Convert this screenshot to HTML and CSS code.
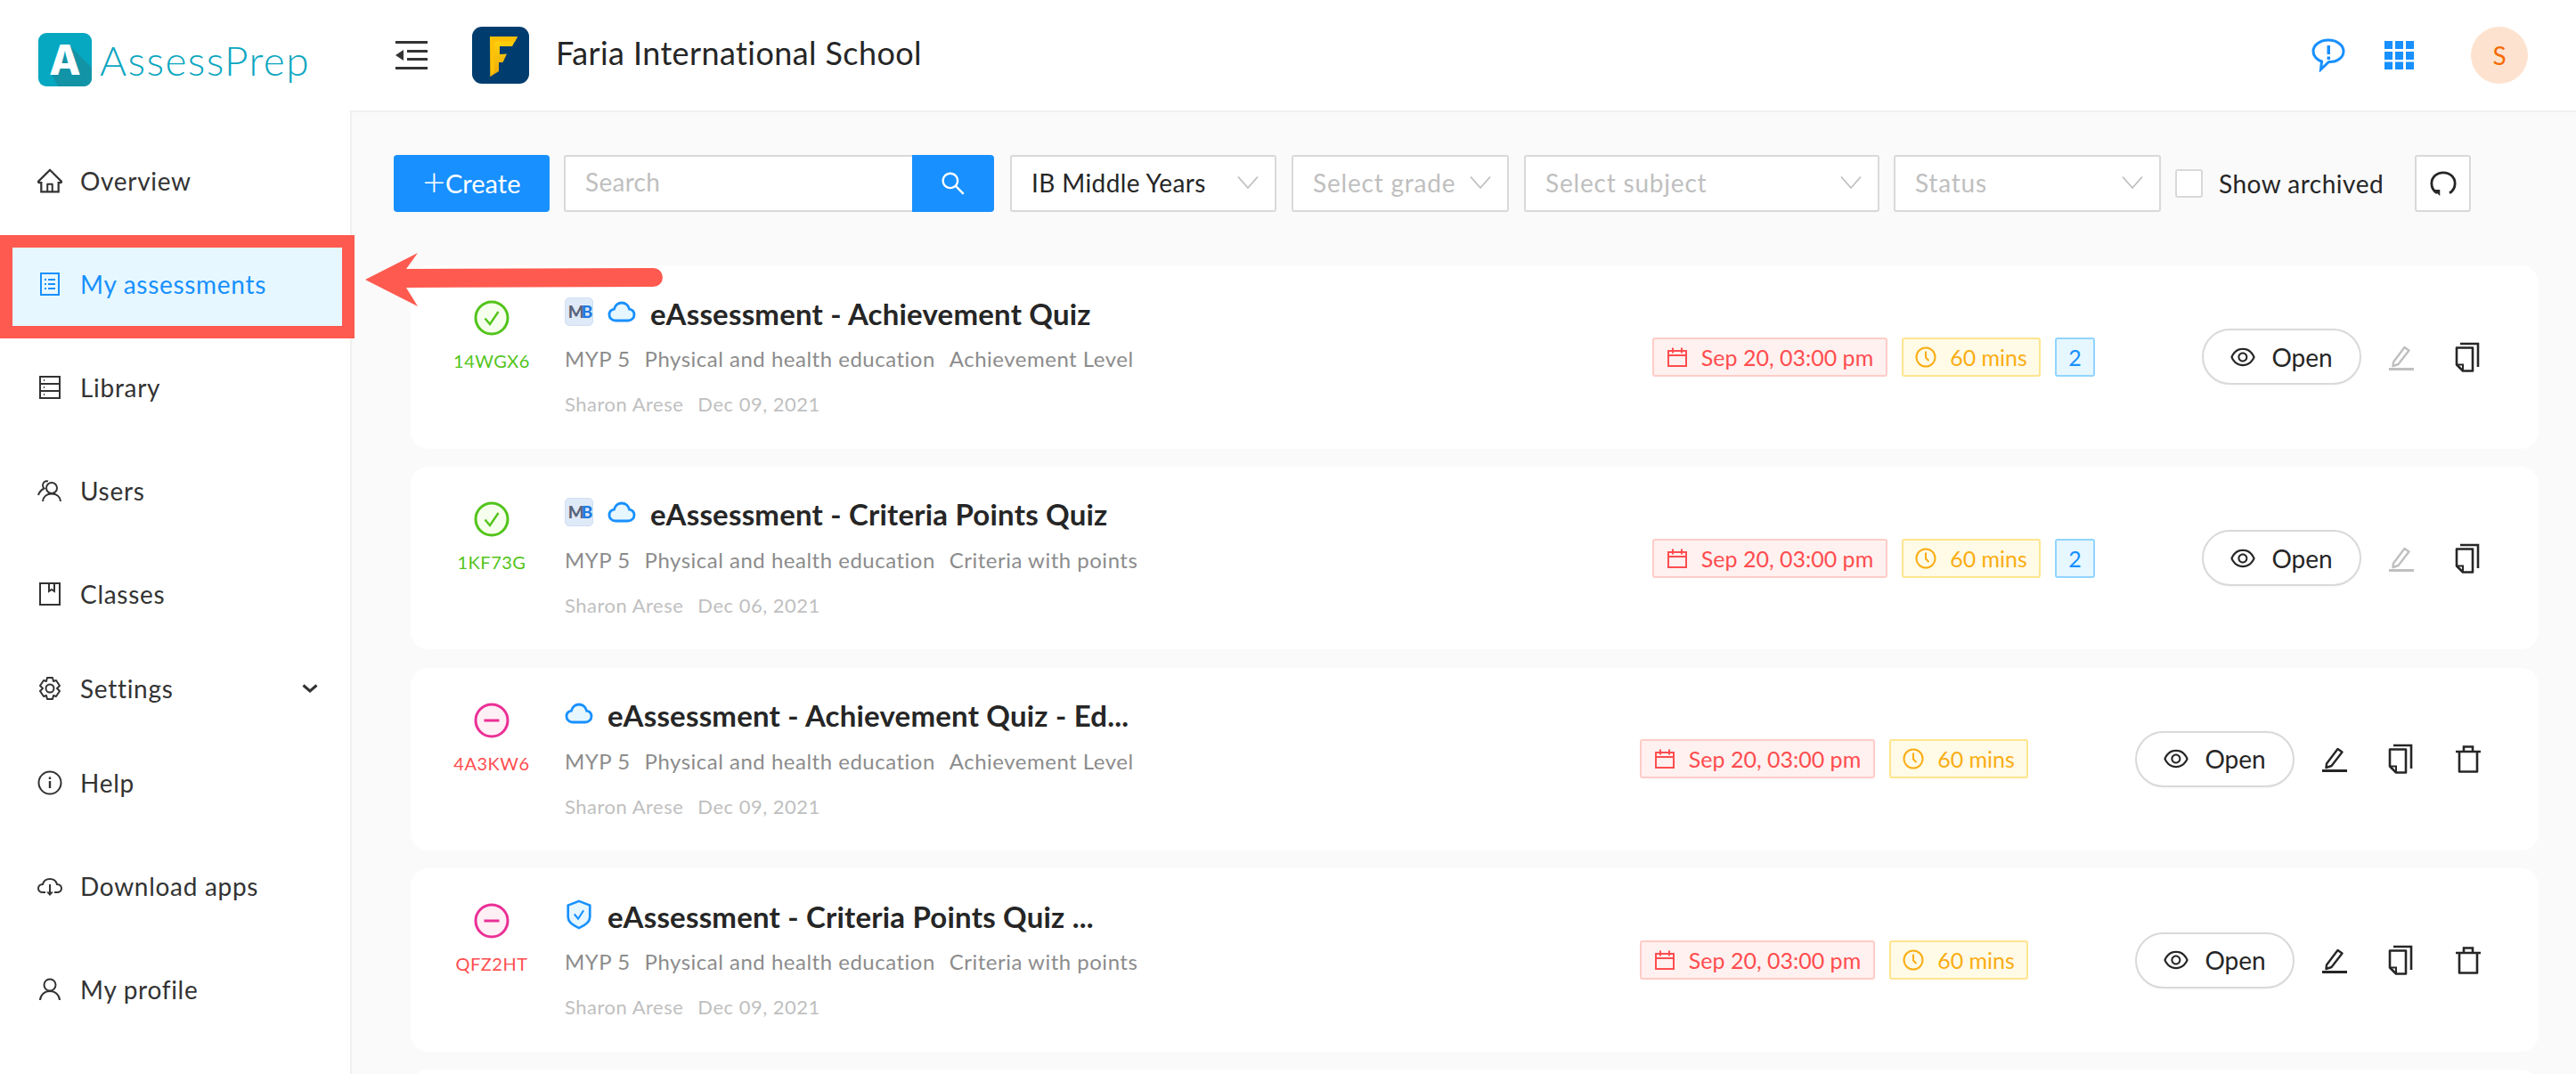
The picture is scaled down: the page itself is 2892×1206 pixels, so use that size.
FILE: index.html
```html
<!DOCTYPE html>
<html lang="en">
<head>
  <meta charset="UTF-8">
  <title>AssessPrep - My assessments</title>
  <link rel="stylesheet" href="styles.css">
</head>
<body>
  <!-- icons used more than once -->
  <svg class="sprite" xmlns="http://www.w3.org/2000/svg">
    <symbol id="i-eye" viewBox="64 64 896 896"><path d="M942.2 486.2C847.4 286.5 704.1 186 512 186c-192.2 0-335.4 100.5-430.2 300.3a60.3 60.3 0 000 51.5C176.6 737.5 319.9 838 512 838c192.2 0 335.4-100.5 430.2-300.3 7.7-16.2 7.7-35 0-51.5zM512 766c-161.3 0-279.4-81.8-362.7-254C232.6 339.8 350.7 258 512 258c161.3 0 279.4 81.8 362.7 254C791.5 684.2 673.4 766 512 766zm-4-430c-97.2 0-176 78.8-176 176s78.8 176 176 176 176-78.8 176-176-78.8-176-176-176zm0 288c-61.9 0-112-50.1-112-112s50.1-112 112-112 112 50.1 112 112-50.1 112-112 112z" fill="currentColor"/></symbol>
    <symbol id="i-cal" viewBox="0 0 24 24"><path d="M2 5h20v17H2zM2 10h20M7 1.500v6M17 1.500v6" fill="none" stroke="currentColor" stroke-width="2"/></symbol>
    <symbol id="i-clock" viewBox="0 0 24 24"><circle cx="12" cy="12" r="10.500" fill="none" stroke="currentColor" stroke-width="2"/><path d="M12 5.500v7l3.500 3.500" fill="none" stroke="currentColor" stroke-width="2"/></symbol>
    <symbol id="i-pencil" viewBox="0 0 30 30"><path d="M6 20.500 18.500 4l5 3.500L11.500 23l-6 2z" fill="none" stroke="currentColor" stroke-width="2.400" stroke-linejoin="round"/><path d="M1 28.500h28" fill="none" stroke="currentColor" stroke-width="3"/></symbol>
    <symbol id="i-copy" viewBox="0 0 30 34"><path d="M6 2h20v26" fill="none" stroke="currentColor" stroke-width="2.600"/><path d="M2 6.500h18v26H9l-7-7z" fill="none" stroke="currentColor" stroke-width="2.600" stroke-linejoin="round"/><path d="M2.500 25.500H9v6.500" fill="none" stroke="currentColor" stroke-width="2"/></symbol>
    <symbol id="i-trash" viewBox="0 0 30 32"><path d="M1 8h28M10 8V2.500h10V8" fill="none" stroke="currentColor" stroke-width="2.600"/><path d="M5 8v22.500h20V8" fill="none" stroke="currentColor" stroke-width="2.600" stroke-linejoin="round"/></symbol>
    <symbol id="i-cloud" viewBox="0 0 32 24"><path d="M9 22C5 22 2 19 2 15.500c0-3.300 2.200-5.700 5.400-6.300C8.500 4.800 12 2 16 2s7.500 2.800 8.600 7.200c3.200.6 5.400 3 5.400 6.300 0 3.500-3 6.500-7 6.500z" fill="#e6f7ff" stroke="#1890ff" stroke-width="2.800"/></symbol>
    <symbol id="i-chevron" viewBox="0 0 24 16"><path d="M1 1.500 12 14 23 1.500" fill="none" stroke="currentColor" stroke-width="1.800"/></symbol>
    <symbol id="i-ok" viewBox="0 0 40 40"><circle cx="20" cy="20" r="18" fill="#f6ffed" stroke="#52c41a" stroke-width="3"/><path d="M12.500 20.500 18 27l9.500-14" fill="none" stroke="#52c41a" stroke-width="2.400"/></symbol>
    <symbol id="i-minus" viewBox="0 0 40 40"><circle cx="20" cy="20" r="18" fill="#fff0f6" stroke="#eb2f96" stroke-width="3"/><path d="M11.500 20h17" fill="none" stroke="#eb2f96" stroke-width="3"/></symbol>
  </svg>

  <header class="topbar">
    <div class="brand">
      <svg class="brand-mark" viewBox="0 0 60 60">
        <rect width="60" height="60" rx="9" fill="#06a7c0"/>
        <path d="M15 46 37 16 60 39v12a9 9 0 0 1-9 9H22z" fill="#1393a6"/>
        <text x="30" y="47" text-anchor="middle" class="brand-letter">A</text>
      </svg>
      <span class="brand-name">AssessPrep</span>
    </div>
    <svg class="collapse-icon" viewBox="0 0 36 32">
      <path d="M0 1.500h36M13 11.500h23M13 20.500h23M0 30.500h36" fill="none" stroke="#333" stroke-width="3"/>
      <path d="M0 16 9 10v12z" fill="#333"/>
    </svg>
    <svg class="school-logo" viewBox="0 0 64 64">
      <defs>
        <linearGradient id="gold" x1="0" y1="0" x2="0" y2="1">
          <stop offset="0" stop-color="#ffd60a"/>
          <stop offset="1" stop-color="#eda80c"/>
        </linearGradient>
      </defs>
      <rect width="64" height="64" rx="11" fill="#003d6e"/>
      <path d="M20 11h31l-6 11H31v9l8-.5-4.500 9.500H30v10l-9.500 6z" fill="url(#gold)"/>
      <path d="M20 11l5 6h23l3-6zM25 17v33l-4.500 6V11z" fill="#ffc107"/>
    </svg>
    <h1 class="school-name">Faria International School</h1>
    <div class="topbar-right">
      <svg class="chat-icon" viewBox="0 0 38 38">
        <path d="M19 2C9.500 2 2 7.700 2 14.500c0 5.500 4.500 10 9.500 11.500l-1 9 9-8.500C29 27 36 21.500 36 14.500 36 7.700 28.500 2 19 2z" fill="none" stroke="#1890ff" stroke-width="3"/>
        <path d="M17.500 8h3.500v10h-3.500zM17.500 20.500h3.500V24h-3.500z" fill="#1890ff"/>
      </svg>
      <svg class="apps-icon" viewBox="0 0 34 32">
        <g fill="#1890ff">
          <rect width="9" height="9"/><rect x="12" width="9" height="9"/><rect x="24" width="9" height="9"/>
          <rect y="12" width="9" height="9"/><rect x="12" y="12" width="9" height="9"/><rect x="24" y="12" width="9" height="9"/>
          <rect y="23.500" width="9" height="9"/><rect x="12" y="23.500" width="9" height="9"/><rect x="24" y="23.500" width="9" height="9"/>
        </g>
      </svg>
      <div class="avatar">S</div>
    </div>
  </header>

  <div class="layout">
    <nav class="sidebar">
      <a class="nav-item" href="#">
        <svg class="nav-icon" viewBox="64 64 896 896"><path fill="currentColor" d="M946.500 505L560.100 118.800l-25.900-25.900a31.500 31.500 0 00-44.400 0L77.500 505a63.900 63.900 0 00-18.800 46c.4 35.200 29.700 63.300 64.900 63.300h42.500V940h691.800V614.300h43.400c17.100 0 33.200-6.700 45.300-18.800a63.600 63.600 0 0018.700-45.300c0-17-6.700-33.100-18.800-45.200zM568 868H456V664h112v204zm217.900-325.700V868H632V640c0-22.100-17.900-40-40-40H432c-22.100 0-40 17.900-40 40v228H238.100V542.300h-96l370-369.700 23.100 23.100L882 542.300h-96.100z"/></svg>
        Overview
      </a>
      <a class="nav-item nav-item-active" href="#">
        <svg class="nav-icon" viewBox="0 0 28 28"><path d="M4 2h20v24H4z" fill="none" stroke="currentColor" stroke-width="2"/><path d="M8 9h2M12 9h8M8 14h2M12 14h8M8 19h2M12 19h8" fill="none" stroke="currentColor" stroke-width="2"/></svg>
        My assessments
        <svg class="callout-arrow" viewBox="0 0 334 60"><path d="M0 30 59 0 46 18 323.500 17a10.500 10.500 0 0 1 0 21L46 39l13 21z" fill="#ff5a4f"/></svg>
      </a>
      <a class="nav-item" href="#">
        <svg class="nav-icon" viewBox="0 0 28 28"><path d="M3 2h22v24H3zM3 10h22M3 18h22M7 6h1M7 14h1M7 22h1" fill="none" stroke="currentColor" stroke-width="2"/></svg>
        Library
      </a>
      <a class="nav-item" href="#">
        <svg class="nav-icon" viewBox="0 0 28 28"><circle cx="16" cy="11" r="6" fill="none" stroke="currentColor" stroke-width="2"/><path d="M6 26c.5-5.500 4.500-8.500 10-8.500S25.500 20.500 26 26M12 3.500C9 2.500 6 4.500 6 8c0 1.500.5 2.500 1.500 3.500C4.500 13 2 15.500 1 19" fill="none" stroke="currentColor" stroke-width="2"/></svg>
        Users
      </a>
      <a class="nav-item" href="#">
        <svg class="nav-icon" viewBox="0 0 28 28"><path d="M3 2h22v24H3zM13 2v9l3-2 3 2V2" fill="none" stroke="currentColor" stroke-width="2"/></svg>
        Classes
      </a>
      <a class="nav-item nav-item-short" href="#">
        <svg class="nav-icon" viewBox="0 0 28 28"><path d="M11 2h6l1 4 3-1 4 6-3 3 3 3-4 6-3-1-1 4h-6l-1-4-3 1-4-6 3-3-3-3 4-6 3 1z" fill="none" stroke="currentColor" stroke-width="2" stroke-linejoin="round"/><circle cx="14" cy="14" r="4.500" fill="none" stroke="currentColor" stroke-width="2"/></svg>
        Settings
        <svg class="nav-caret" viewBox="0 0 18 10"><path d="M1.500 1.500 9 8l7.500-6.500" fill="none" stroke="currentColor" stroke-width="3"/></svg>
      </a>
      <a class="nav-item" href="#">
        <svg class="nav-icon" viewBox="0 0 28 28"><circle cx="14" cy="14" r="12.500" fill="none" stroke="currentColor" stroke-width="2"/><path d="M14 12v8M14 7.500v2.500" fill="none" stroke="currentColor" stroke-width="2.400"/></svg>
        Help
      </a>
      <a class="nav-item" href="#">
        <svg class="nav-icon" viewBox="0 0 28 28"><path d="M9 21H6c-3 0-5-2-5-4.500S3 12 6 12c1-4 4-6 8-6s7 2 8 6c3 0 5 2 5 4.500S25 21 22 21h-3" fill="none" stroke="currentColor" stroke-width="2"/><path d="M14 12v11" fill="none" stroke="currentColor" stroke-width="2"/><path d="M10 20.500h8L14 25z" fill="currentColor"/></svg>
        Download apps
      </a>
      <a class="nav-item" href="#">
        <svg class="nav-icon" viewBox="0 0 28 28"><circle cx="14" cy="9" r="6.500" fill="none" stroke="currentColor" stroke-width="2"/><path d="M3 26c.5-6 5-10 11-10s10.500 4 11 10" fill="none" stroke="currentColor" stroke-width="2"/></svg>
        My profile
      </a>
    </nav>

    <main class="content">
      <div class="toolbar">
        <button class="btn-create"><span class="plus">+</span>Create</button>
        <div class="search">
          <div class="search-input">Search</div>
          <button class="search-btn">
            <svg viewBox="64 64 896 896"><path fill="#fff" d="M909.600 854.500L649.900 594.800C690.200 542.700 712 479 712 412c0-80.200-31.300-155.400-87.900-212.100-56.600-56.700-132-87.900-212.100-87.900s-155.500 31.300-212.100 87.900C143.200 256.500 112 331.800 112 412c0 80.100 31.300 155.500 87.900 212.100C256.500 680.800 331.800 712 412 712c67 0 130.600-21.800 182.700-62l259.700 259.600a8.200 8.200 0 0011.600 0l43.600-43.500a8.200 8.200 0 000-11.600zM570.400 570.400C528 612.700 471.800 636 412 636s-116-23.300-158.400-65.600C211.300 528 188 471.800 188 412s23.300-116.100 65.600-158.400C296 211.300 352.200 188 412 188s116.100 23.200 158.400 65.600S636 352.200 636 412s-23.300 116.100-65.600 158.400z"/></svg>
          </button>
        </div>
        <div class="select select-program">IB Middle Years<svg class="select-arrow"><use href="#i-chevron"/></svg></div>
        <div class="select select-grade placeholder">Select grade<svg class="select-arrow"><use href="#i-chevron"/></svg></div>
        <div class="select select-subject placeholder">Select subject<svg class="select-arrow"><use href="#i-chevron"/></svg></div>
        <div class="select select-status placeholder">Status<svg class="select-arrow"><use href="#i-chevron"/></svg></div>
        <label class="archived"><span class="checkbox"></span>Show archived</label>
        <button class="btn-refresh">
          <svg viewBox="0 0 32 32"><path d="M8.500 27.500C4.500 25 2 21 2 16 2 8.500 8 3 16 3s14 5.500 14 13c0 5-2.500 9-6.500 11.500" fill="none" stroke="#262626" stroke-width="3"/><path d="M4 23.500h8V31zM28 23.500h-8" fill="#262626"/></svg>
        </button>
      </div>

      <div class="card-list">
        <article class="card">
          <div class="status">
            <svg class="status-icon"><use href="#i-ok"/></svg>
            <div class="code code-ok">14WGX6</div>
          </div>
          <div class="info">
            <div class="title-row">
              <span class="mb-badge">M<b>B</b></span>
              <svg class="type-icon"><use href="#i-cloud"/></svg>
              <h2 class="title">eAssessment - Achievement Quiz</h2>
            </div>
            <div class="meta"><span>MYP 5</span><span>Physical and health education</span><span>Achievement Level</span></div>
            <div class="author"><span>Sharon Arese</span><span>Dec 09, 2021</span></div>
          </div>
          <div class="tags">
            <span class="tag tag-date"><svg><use href="#i-cal"/></svg>Sep 20, 03:00 pm</span>
            <span class="tag tag-time"><svg><use href="#i-clock"/></svg>60 mins</span>
            <span class="tag tag-count">2</span>
          </div>
          <button class="btn-open"><svg><use href="#i-eye"/></svg>Open</button>
          <div class="actions">
            <svg class="action action-disabled"><use href="#i-pencil"/></svg>
            <svg class="action"><use href="#i-copy"/></svg>
          </div>
        </article>

        <article class="card">
          <div class="status">
            <svg class="status-icon"><use href="#i-ok"/></svg>
            <div class="code code-ok">1KF73G</div>
          </div>
          <div class="info">
            <div class="title-row">
              <span class="mb-badge">M<b>B</b></span>
              <svg class="type-icon"><use href="#i-cloud"/></svg>
              <h2 class="title">eAssessment - Criteria Points Quiz</h2>
            </div>
            <div class="meta"><span>MYP 5</span><span>Physical and health education</span><span>Criteria with points</span></div>
            <div class="author"><span>Sharon Arese</span><span>Dec 06, 2021</span></div>
          </div>
          <div class="tags">
            <span class="tag tag-date"><svg><use href="#i-cal"/></svg>Sep 20, 03:00 pm</span>
            <span class="tag tag-time"><svg><use href="#i-clock"/></svg>60 mins</span>
            <span class="tag tag-count">2</span>
          </div>
          <button class="btn-open"><svg><use href="#i-eye"/></svg>Open</button>
          <div class="actions">
            <svg class="action action-disabled"><use href="#i-pencil"/></svg>
            <svg class="action"><use href="#i-copy"/></svg>
          </div>
        </article>

        <article class="card">
          <div class="status">
            <svg class="status-icon"><use href="#i-minus"/></svg>
            <div class="code code-off">4A3KW6</div>
          </div>
          <div class="info">
            <div class="title-row">
              <svg class="type-icon"><use href="#i-cloud"/></svg>
              <h2 class="title">eAssessment - Achievement Quiz - Ed...</h2>
            </div>
            <div class="meta"><span>MYP 5</span><span>Physical and health education</span><span>Achievement Level</span></div>
            <div class="author"><span>Sharon Arese</span><span>Dec 09, 2021</span></div>
          </div>
          <div class="tags">
            <span class="tag tag-date"><svg><use href="#i-cal"/></svg>Sep 20, 03:00 pm</span>
            <span class="tag tag-time"><svg><use href="#i-clock"/></svg>60 mins</span>
          </div>
          <button class="btn-open"><svg><use href="#i-eye"/></svg>Open</button>
          <div class="actions">
            <svg class="action"><use href="#i-pencil"/></svg>
            <svg class="action"><use href="#i-copy"/></svg>
            <svg class="action"><use href="#i-trash"/></svg>
          </div>
        </article>

        <article class="card">
          <div class="status">
            <svg class="status-icon"><use href="#i-minus"/></svg>
            <div class="code code-off">QFZ2HT</div>
          </div>
          <div class="info">
            <div class="title-row">
              <svg class="type-icon" viewBox="0 0 32 36"><path d="M16 2 29 7v14c0 5-6 10-13 13C9 31 3 26 3 21V7z" fill="#e6f7ff" stroke="#1890ff" stroke-width="2.800"/><path d="M10.500 17.500 15 23l6.500-10" fill="none" stroke="#1890ff" stroke-width="2.200"/></svg>
              <h2 class="title">eAssessment - Criteria Points Quiz ...</h2>
            </div>
            <div class="meta"><span>MYP 5</span><span>Physical and health education</span><span>Criteria with points</span></div>
            <div class="author"><span>Sharon Arese</span><span>Dec 09, 2021</span></div>
          </div>
          <div class="tags">
            <span class="tag tag-date"><svg><use href="#i-cal"/></svg>Sep 20, 03:00 pm</span>
            <span class="tag tag-time"><svg><use href="#i-clock"/></svg>60 mins</span>
          </div>
          <button class="btn-open"><svg><use href="#i-eye"/></svg>Open</button>
          <div class="actions">
            <svg class="action"><use href="#i-pencil"/></svg>
            <svg class="action"><use href="#i-copy"/></svg>
            <svg class="action"><use href="#i-trash"/></svg>
          </div>
        </article>

        <article class="card"></article>
      </div>
    </main>
  </div>
</body>
</html>
```

FILE: styles.css
```css
* {
  margin: 0;
  padding: 0;
  box-sizing: border-box;
}
html, body {
  height: 100%;
  overflow: hidden;
}
body {
  display: flex;
  flex-direction: column;
  background: #fff;
  color: #262626;
  font-family: "Lato", "Noto Sans", sans-serif;
  font-size: 28px;
}
a {
  color: inherit;
  text-decoration: none;
}
button {
  font: inherit;
  border: 0;
  cursor: pointer;
}
.sprite {
  display: none;
}

/* top bar */
.topbar {
  display: flex;
  align-items: center;
  height: 124px;
  flex: none;
}
.brand {
  display: flex;
  align-items: center;
  width: 444px;
  padding: 10px 0 0 43px;
}
.brand-mark {
  width: 60px;
  height: 60px;
}
.brand-letter {
  font-family: "Inter", sans-serif;
  font-size: 46px;
  font-weight: 800;
  fill: #fff;
}
.brand-name {
  margin-left: 9px;
  font-size: 46px;
  font-weight: 300;
  letter-spacing: 1.4px;
  color: #0aa6bf;
}
.collapse-icon {
  width: 36px;
  height: 32px;
}
.school-logo {
  width: 64px;
  height: 64px;
  margin-left: 50px;
}
.school-name {
  margin: -6px 0 0 30px;
  font-size: 36px;
  font-weight: 400;
  letter-spacing: .4px;
}
.topbar-right {
  display: flex;
  align-items: center;
  margin-left: auto;
  padding-right: 54px;
}
.chat-icon {
  width: 38px;
  height: 38px;
}
.apps-icon {
  width: 34px;
  height: 32px;
  margin-left: 44px;
}
.avatar {
  width: 64px;
  height: 64px;
  margin-left: 63px;
  border-radius: 50%;
  background: #fde3cf;
  color: #f56a00;
  font-size: 28px;
  line-height: 64px;
  text-align: center;
}

/* sidebar */
.layout {
  display: flex;
  flex: 1;
  min-height: 0;
}
.sidebar {
  position: relative;
  z-index: 1;
  display: flex;
  flex-direction: column;
  gap: 28px;
  flex: none;
  width: 393px;
  padding-top: 35px;
}
.nav-item {
  display: flex;
  align-items: center;
  gap: 20px;
  height: 88px;
  padding-left: 42px;
  font-size: 28px;
  letter-spacing: .7px;
  color: #333;
}
.nav-item-short {
  height: 68px;
}
.nav-item-active {
  position: relative;
  isolation: isolate;
  color: #1890ff;
}
/* highlight box of the annotation */
.nav-item-active::before {
  content: "";
  position: absolute;
  z-index: -1;
  top: -11px;
  bottom: -17px;
  left: 0;
  right: -5px;
  background: #e6f7ff;
  border: 14px solid #ff5a4f;
}
.callout-arrow {
  position: absolute;
  left: 410px;
  top: 9px;
  width: 334px;
  height: 60px;
}
.nav-icon {
  width: 28px;
  height: 28px;
  flex: none;
}
.nav-caret {
  width: 18px;
  height: 10px;
  margin-left: auto;
  margin-right: 36px;
}

/* main area */
.content {
  flex: 1;
  min-width: 0;
  background: #fafafa;
  border-top: 2px solid #f0f0f0;
  border-left: 2px solid #f0f0f0;
}
.toolbar {
  display: flex;
  align-items: center;
  gap: 16px;
  height: 64px;
  margin-top: 48px;
  padding-left: 47px;
  font-size: 28px;
}
.btn-create {
  display: flex;
  align-items: center;
  justify-content: center;
  width: 175px;
  height: 64px;
  padding-bottom: 2px;
  background: #1890ff;
  border-radius: 4px;
  color: #fff;
  font-size: 29px;
}
.plus {
  font-size: 44px;
  font-weight: 300;
  line-height: 1;
  margin-top: -4px;
}
.search {
  display: flex;
  width: 483px;
  height: 64px;
  margin-right: 2px;
}
.search-input {
  flex: 1;
  padding-left: 22px;
  background: #fff;
  border: 2px solid #d9d9d9;
  border-right: 0;
  border-radius: 3px 0 0 3px;
  color: #bfbfbf;
  letter-spacing: .3px;
  line-height: 57px;
}
.search-btn {
  display: flex;
  align-items: center;
  justify-content: center;
  width: 92px;
  background: #1890ff;
  border-radius: 0 4px 4px 0;
}
.search-btn svg {
  width: 28px;
  height: 28px;
}
.select {
  display: flex;
  align-items: center;
  justify-content: space-between;
  height: 64px;
  padding: 0 18px 3px 22px;
  background: #fff;
  border: 2px solid #d9d9d9;
  border-radius: 3px;
  letter-spacing: .4px;
}
.placeholder {
  color: #bfbfbf;
  letter-spacing: .8px;
}
.select-program {
  width: 299px;
  margin-right: 1px;
}
.select-grade {
  width: 244px;
  margin-right: 1px;
}
.select-subject { width: 399px; }
.select-status { width: 300px; }
.select-arrow {
  width: 24px;
  height: 16px;
  color: #bfbfbf;
}
.archived {
  display: flex;
  align-items: center;
  gap: 18px;
  width: 253px;
  letter-spacing: .5px;
  white-space: nowrap;
}
.checkbox {
  width: 31px;
  height: 32px;
  background: #fff;
  border: 2px solid #d9d9d9;
  border-radius: 3px;
}
.btn-refresh {
  display: flex;
  align-items: center;
  justify-content: center;
  width: 63px;
  height: 64px;
  background: #fff;
  border: 2px solid #d9d9d9;
  border-radius: 3px;
}
.btn-refresh svg {
  width: 30px;
  height: 30px;
}

/* assessment cards */
.card-list {
  display: flex;
  flex-direction: column;
  gap: 20.250px;
  margin-top: 60px;
  padding: 0 42px 0 66px;
}
.card {
  display: flex;
  align-items: center;
  flex: none;
  height: 205.500px;
  padding: 0 64px 0 46px;
  background: #fff;
  border-radius: 20px;
}
.status {
  align-self: flex-start;
  display: flex;
  flex-direction: column;
  align-items: center;
  width: 90px;
  margin-right: 37px;
  padding-top: 39px;
}
.status-icon {
  width: 40px;
  height: 40px;
}
.code {
  margin-top: 13px;
  font-size: 20px;
  line-height: 30px;
  letter-spacing: .5px;
  white-space: nowrap;
}
.code-ok { color: #52c41a; }
.code-off { color: #ff4d4f; }
.info {
  flex: 1;
  align-self: flex-start;
  min-width: 0;
  padding-top: 28px;
}
.title-row {
  display: flex;
  align-items: center;
  gap: 16px;
  height: 51px;
}
.mb-badge {
  width: 32px;
  height: 32px;
  margin-top: -4px;
  background: #dfeaf8;
  border: 1px solid #cfdff2;
  border-radius: 5px;
  color: #5b6478;
  font-size: 19px;
  font-weight: 900;
  line-height: 30px;
  letter-spacing: -3px;
  text-align: center;
}
.mb-badge b {
  color: #1f7be0;
}
.type-icon {
  width: 32px;
  height: 24px;
  margin-top: -4px;
}
.type-icon[viewBox] {
  height: 34px;
}
.title {
  font-size: 33px;
  font-weight: 700;
  letter-spacing: .2px;
  white-space: nowrap;
}
.meta, .author {
  display: flex;
  gap: 16px;
  height: 51px;
  align-items: center;
}
.meta {
  font-size: 24px;
  letter-spacing: .5px;
  color: #8c8c8c;
}
.author {
  font-size: 22px;
  letter-spacing: .5px;
  color: #bfbfbf;
}
.tags {
  display: flex;
  gap: 16px;
  margin-right: 120px;
}
.tag {
  display: flex;
  align-items: center;
  justify-content: center;
  gap: 15px;
  height: 44px;
  border: 2px solid;
  border-radius: 3px;
  font-size: 25px;
  white-space: nowrap;
}
.tag svg {
  width: 24px;
  height: 24px;
  flex: none;
}
.tag-date {
  width: 264px;
  background: #fff1f0;
  border-color: #ffccc7;
  color: #ff4d4f;
}
.tag-time {
  width: 156px;
  background: #fffbe6;
  border-color: #ffe58f;
  color: #faad14;
}
.tag-count {
  width: 45px;
  background: #e6f7ff;
  border-color: #91d5ff;
  color: #1890ff;
}
.btn-open {
  display: flex;
  align-items: center;
  justify-content: center;
  gap: 18px;
  width: 179px;
  height: 63px;
  background: #fff;
  border: 2px solid #d9d9d9;
  border-radius: 32px;
  box-shadow: 0 2px 0 rgba(0, 0, 0, .015);
  color: #262626;
  font-size: 28px;
}
.btn-open svg {
  width: 28px;
  height: 28px;
}
.actions {
  display: flex;
  gap: 45px;
  margin-left: 30px;
}
.action {
  width: 30px;
  height: 34px;
  color: #262626;
}
.action-disabled {
  color: #bfbfbf;
}
```
